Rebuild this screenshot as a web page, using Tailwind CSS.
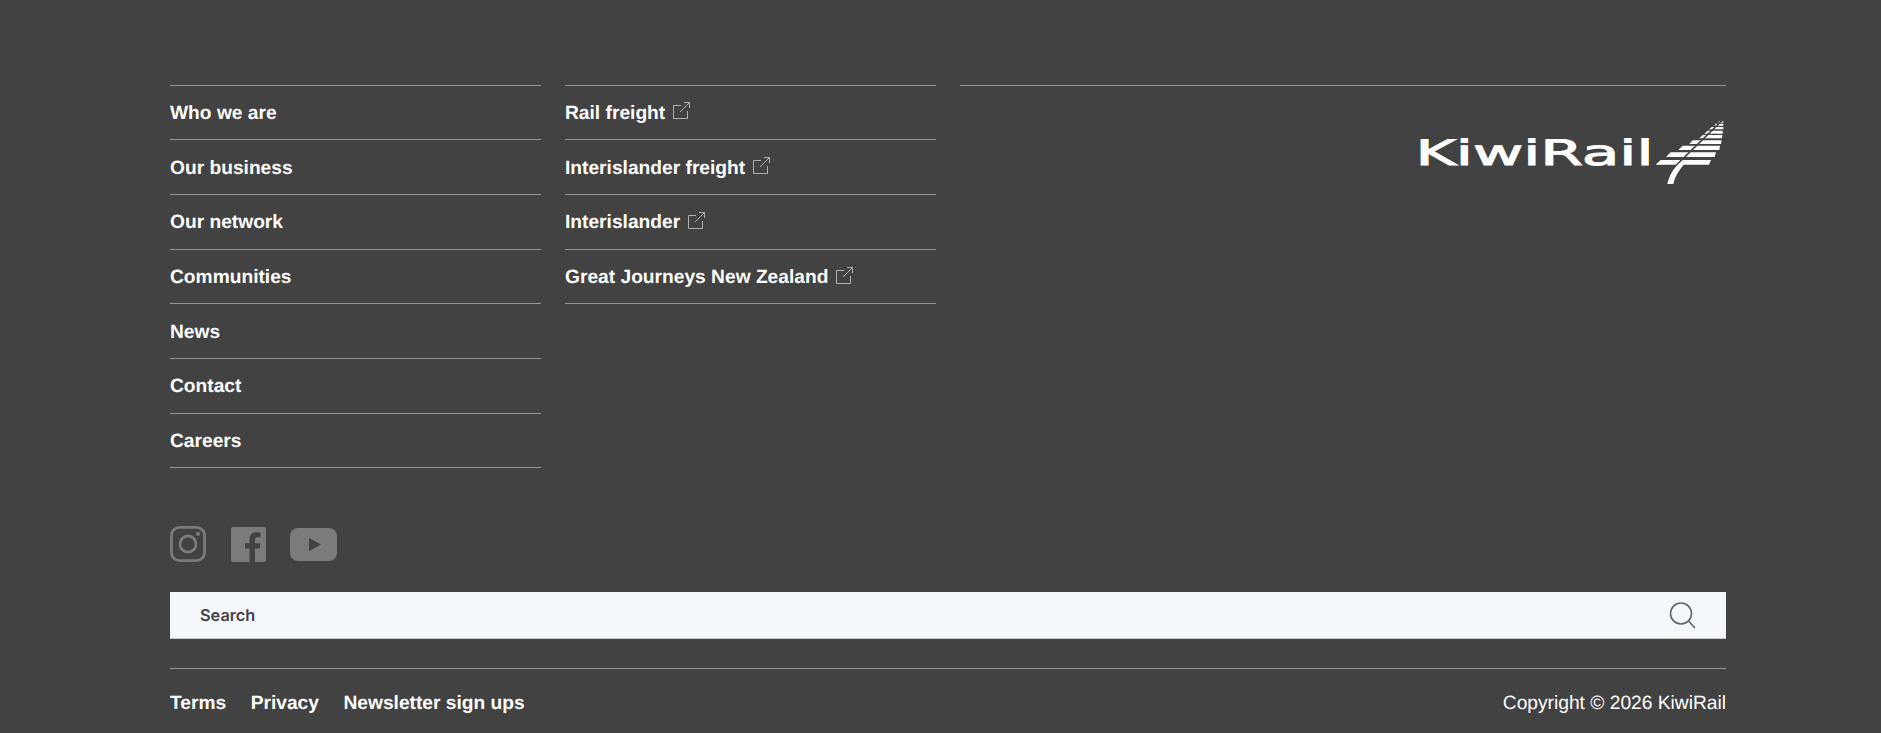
<!DOCTYPE html>
<html>
<head>
    <meta charset="UTF-8">
    <meta name="viewport" content="width=device-width, initial-scale=1.0">
    <script src="https://cdn.jsdelivr.net/npm/@tailwindcss/browser@4"></script>
</head>
<body>
<footer class="h-[733px] overflow-hidden bg-[#424242] pl-[170px] pr-[155px] pt-[84.6px] font-['Liberation_Sans',Arial,sans-serif] text-white [text-rendering:geometricPrecision]">
  <div class="flex gap-6">
    <ul class="w-[371px] border-b border-[#969696] text-[19.2px] font-bold">
      <li class="flex h-[54.7px] items-center border-t border-[#969696] pt-[4px]"><a href="#">Who we are</a></li>
      <li class="flex h-[54.7px] items-center border-t border-[#969696] pt-[4px]"><a href="#">Our business</a></li>
      <li class="flex h-[54.7px] items-center border-t border-[#969696] pt-[4px]"><a href="#">Our network</a></li>
      <li class="flex h-[54.7px] items-center border-t border-[#969696] pt-[4px]"><a href="#">Communities</a></li>
      <li class="flex h-[54.7px] items-center border-t border-[#969696] pt-[4px]"><a href="#">News</a></li>
      <li class="flex h-[54.7px] items-center border-t border-[#969696] pt-[4px]"><a href="#">Contact</a></li>
      <li class="flex h-[54.7px] items-center border-t border-[#969696] pt-[4px]"><a href="#">Careers</a></li>
    </ul>
    <ul class="w-[371px] self-start border-b border-[#969696] text-[19.2px] font-bold">
      <li class="flex h-[54.7px] items-center gap-2 border-t border-[#969696] pt-[4px]">
        <a href="#">Rail freight</a>
        <svg class="mb-[7px] h-[17px] w-[17px]" viewBox="0 0 17 17" fill="none" stroke="#b0b0b0"><path d="M8 3.500H.5v13h14V9M7 10 16.500.5M11 .5h5.500V6"/></svg>
      </li>
      <li class="flex h-[54.7px] items-center gap-2 border-t border-[#969696] pt-[4px]">
        <a href="#">Interislander freight</a>
        <svg class="mb-[7px] h-[17px] w-[17px]" viewBox="0 0 17 17" fill="none" stroke="#b0b0b0"><path d="M8 3.500H.5v13h14V9M7 10 16.500.5M11 .5h5.500V6"/></svg>
      </li>
      <li class="flex h-[54.7px] items-center gap-2 border-t border-[#969696] pt-[4px]">
        <a href="#">Interislander</a>
        <svg class="mb-[7px] h-[17px] w-[17px]" viewBox="0 0 17 17" fill="none" stroke="#b0b0b0"><path d="M8 3.500H.5v13h14V9M7 10 16.500.5M11 .5h5.500V6"/></svg>
      </li>
      <li class="flex h-[54.7px] items-center gap-2 border-t border-[#969696] pt-[4px]">
        <a href="#">Great Journeys New Zealand</a>
        <svg class="mb-[7px] h-[17px] w-[17px]" viewBox="0 0 17 17" fill="none" stroke="#b0b0b0"><path d="M8 3.500H.5v13h14V9M7 10 16.500.5M11 .5h5.500V6"/></svg>
      </li>
    </ul>
    <div class="flex flex-1 justify-end self-start border-t border-[#969696] pt-[34px]">
      <svg class="h-[65px] w-[311px]" viewBox="-4 0 311 65" fill="#fff">
        <text x="-3.500" y="45" textLength="238" lengthAdjust="spacingAndGlyphs" font-family="DejaVu Sans" font-size="35" stroke="#fff" stroke-width="1">KiwiRail</text>
        <g transform="translate(221 -10) scale(.3333)">
          <polygon points="47,164 62,150 213,150 207,164"/>
          <polygon points="78,141 92,127 228,127 224,141"/>
          <polygon points="115,120 128,107 240,107 238,120"/>
          <polygon points="148,102 158,91 245,91 243,102"/>
          <polygon points="178,85 188,75 247,75 246,85"/>
          <polygon points="193,71 203,62 248,62 248,71"/>
          <polygon points="208,58 215,51 250,51 250,58"/>
          <polygon points="222,47 228,41 250,41 250,47"/>
          <polygon points="235,38 238,34 250,34 250,38"/>
          <path d="M96 178 248 30" fill="none" stroke="#424242" stroke-width="5"/>
          <path d="M82 222C88 196 100 176 118 160L135 150H145C122 172 106 196 100 222Z"/>
        </g>
      </svg>
    </div>
  </div>

  <div class="mt-[58px] flex items-center">
    <svg class="h-9 w-9" viewBox="0 0 36 36" fill="none" stroke="#7b7b7b" stroke-width="2.800">
      <rect x="1.400" y="1.400" width="33.200" height="33.200" rx="8"/>
      <circle cx="18" cy="18" r="8"/>
      <circle cx="28" cy="8" r="2" fill="#7b7b7b" stroke="none"/>
    </svg>
    <svg class="ml-[25px] h-[35px] w-[35px]" viewBox="0 0 35 35">
      <path fill="#7b7b7b" fill-rule="evenodd" d="M2 0h31a2 2 0 0 1 2 2v31a2 2 0 0 1-2 2h-9V21.500h4.600l.7-5.300H24v-3.400c0-1.500.4-2.600 2.600-2.600h2.800V5.500c-.5-.1-2.200-.2-4-.2-4 0-6.800 2.500-6.800 7v3.900h-4.600v5.300h4.600V35H2a2 2 0 0 1-2-2V2a2 2 0 0 1 2-2Z"/>
    </svg>
    <svg class="ml-6 h-[33px] w-[47px]" viewBox="0 0 47 33">
      <rect width="47" height="33" rx="8" fill="#7b7b7b"/>
      <polygon points="19,10 31,16.500 19,23" fill="#424242"/>
    </svg>
  </div>

  <div class="mt-[30px] flex h-[47px] items-center justify-between border-b border-[#c8c8c8] bg-[#f4f7fc] px-[30px]">
    <span class="font-['Inter',sans-serif] text-[16.300px] font-semibold text-[#424242]">Search</span>
    <svg class="h-[27px] w-[27px]" viewBox="0 0 27 27" fill="none" stroke="#5b6770" stroke-width="1.600">
      <circle cx="12" cy="11.500" r="10.500"/>
      <path d="M19.500 19 26 26"/>
    </svg>
  </div>

  <div class="mt-[29px] flex h-[66px] items-center justify-between border-t border-[#969696] pt-[4px] text-[19.2px]">
    <div class="flex gap-[24.500px] font-bold">
      <a href="#">Terms</a>
      <a href="#">Privacy</a>
      <a href="#">Newsletter sign ups</a>
    </div>
    <span>Copyright © 2026 KiwiRail</span>
  </div>
</footer>
</body>
</html>
